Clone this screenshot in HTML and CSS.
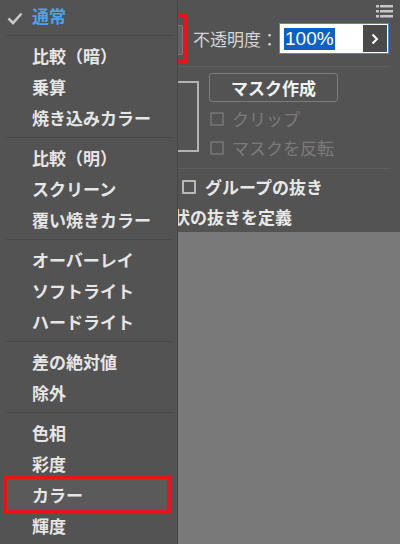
FILE: index.html
```html
<!DOCTYPE html>
<html lang="ja">
<head>
<meta charset="utf-8">
<title>描画モード</title>
<link rel="stylesheet" href="styles.css">
</head>
<body>
<div class="panel">
  <div class="topbar">
    <svg class="panel-menu" width="17" height="13" viewBox="0 0 17 13">
      <rect x="0" y="0" width="3" height="2.5"/><rect x="4" y="0" width="13" height="2.5"/>
      <rect x="0" y="5" width="3" height="2.5"/><rect x="4" y="5" width="13" height="2.5"/>
      <rect x="0" y="10" width="3" height="2.5"/><rect x="4" y="10" width="13" height="2.5"/>
    </svg>
  </div>
  <div class="opacity-row">
    <div class="blend"></div>
    <span class="label">不透明度：</span>
    <div class="field">
      <span class="sel">100%</span>
      <span class="spin"><svg width="8" height="12" viewBox="0 0 8 12"><path d="M1.5 1.5 L6 6 L1.5 10.5" fill="none" stroke="#fff" stroke-width="2"/></svg></span>
    </div>
  </div>
  <div class="rule"></div>
  <div class="mask">
    <div class="thumb"></div>
    <div class="mask-col">
      <div class="btn">マスク作成</div>
      <div class="check disabled"><span class="box"></span><span>クリップ</span></div>
      <div class="check disabled"><span class="box"></span><span>マスクを反転</span></div>
    </div>
  </div>
  <div class="rule rule2"></div>
  <div class="check group"><span class="box"></span><span>グループの抜き</span></div>
  <div class="define">形状の抜きを定義</div>
  <div class="canvas"></div>
  <div class="annot"></div>
</div>
<div class="menu">
  <div class="item current"><span class="slot"><svg class="tick" width="16" height="13" viewBox="0 0 16 13"><path d="M1.5 6.5 L6 11 L14.5 1.5" fill="none" stroke="#c9c9c9" stroke-width="2.6"/></svg></span>通常</div>
  <div class="sep"></div>
  <div class="item"><span class="slot"></span>比較（暗）</div>
  <div class="item"><span class="slot"></span>乗算</div>
  <div class="item"><span class="slot"></span>焼き込みカラー</div>
  <div class="sep"></div>
  <div class="item"><span class="slot"></span>比較（明）</div>
  <div class="item"><span class="slot"></span>スクリーン</div>
  <div class="item"><span class="slot"></span>覆い焼きカラー</div>
  <div class="sep"></div>
  <div class="item"><span class="slot"></span>オーバーレイ</div>
  <div class="item"><span class="slot"></span>ソフトライト</div>
  <div class="item"><span class="slot"></span>ハードライト</div>
  <div class="sep"></div>
  <div class="item"><span class="slot"></span>差の絶対値</div>
  <div class="item"><span class="slot"></span>除外</div>
  <div class="sep"></div>
  <div class="item"><span class="slot"></span>色相</div>
  <div class="item"><span class="slot"></span>彩度</div>
  <div class="item marked"><span class="slot"></span>カラー</div>
  <div class="item"><span class="slot"></span>輝度</div>
</div>
</body>
</html>
```

FILE: styles.css
```css
html, body {
  margin: 0;
  padding: 0;
}
body {
  width: 400px;
  height: 544px;
  overflow: hidden;
  position: relative;
  background: #535353;
  font-family: "Noto Sans CJK JP", "Noto Sans", sans-serif;
  color: #e4e4e4;
}
.panel {
  position: relative;
  height: 544px;
  display: flex;
  flex-direction: column;
}
.topbar {
  height: 23px;
  box-sizing: border-box;
  padding: 5px 7px 0 0;
  display: flex;
  justify-content: flex-end;
  align-items: flex-start;
}
.panel-menu {
  fill: #c6c6c6;
  display: block;
}
.opacity-row {
  height: 31px;
  display: flex;
  align-items: flex-start;
}
.blend {
  margin: 2px 0 0 10px;
  width: 173px;
  height: 30px;
  box-sizing: border-box;
  border: 1px solid #7b7b7b;
  border-radius: 2px;
  background: #626262;
}
.label {
  margin-left: 10px;
  font-size: 17px;
  line-height: 31px;
  color: #d6d6d6;
  width: 85px;
}
.field {
  margin-left: 1px;
  width: 110px;
  height: 31px;
  box-sizing: border-box;
  border: 1px solid #3b8fe2;
  padding: 1px;
  background: #fff;
  display: flex;
  align-items: center;
}
.sel {
  margin-left: 3px;
  height: 22px;
  line-height: 22px;
  padding: 0 1px;
  background: #0b62c6;
  color: #fff;
  font-family: "Liberation Sans", Arial, sans-serif;
  font-size: 19px;
}
.spin {
  margin-left: auto;
  width: 24px;
  height: 27px;
  background: #4a4a4a;
  display: flex;
  align-items: center;
  justify-content: center;
}
.spin svg { display: block; }
.rule {
  margin: 12px 10px 0 0;
  height: 1px;
  background: #5f5f5f;
}
.rule2 {
  margin-top: 6px;
}
.mask {
  padding-top: 6px;
  display: flex;
  align-items: flex-start;
}
.thumb {
  margin: 8px 0 0 139px;
  width: 60px;
  height: 71px;
  box-sizing: border-box;
  border: 2px solid #b3b3b3;
}
.mask-col {
  margin-left: 10px;
  display: flex;
  flex-direction: column;
}
.btn {
  width: 129px;
  height: 29px;
  box-sizing: border-box;
  border: 1px solid #7c7c7c;
  border-radius: 3px;
  margin-bottom: 2px;
  text-align: center;
  font-size: 17px;
  line-height: 27px;
  font-weight: 700;
  color: #f2f2f2;
}
.check {
  height: 29px;
  display: flex;
  align-items: center;
  font-size: 17px;
  line-height: 29px;
}
.check .box {
  width: 14px;
  height: 14px;
  box-sizing: border-box;
  border: 2px solid #b8b8b8;
  border-radius: 1px;
  margin-right: 8px;
}
.disabled {
  margin-left: 1px;
  color: #7b7b7b;
}
.disabled .box {
  border-color: #6e6e6e;
}
.group {
  margin: 3px 0 0 182px;
  font-weight: 700;
  color: #e8e8e8;
}
.group .box {
  margin-right: 9px;
}
.define {
  margin: 1px 0 0 156px;
  height: 30px;
  font-size: 17px;
  line-height: 30px;
  font-weight: 700;
  color: #e8e8e8;
}
.canvas {
  flex: 1;
  background: #797979;
}
.annot {
  position: absolute;
  left: 120px;
  top: 13px;
  width: 68px;
  height: 51px;
  box-sizing: border-box;
  border: 4px solid #e5141d;
}
.menu {
  position: absolute;
  left: 0;
  top: 0;
  width: 177px;
  height: 544px;
  overflow: hidden;
  background: #535353;
  border-right: 1px solid #474747;
}
.item {
  height: 31px;
  margin: 0 10px 0 7px;
  display: flex;
  align-items: center;
  font-size: 17px;
  line-height: 31px;
  font-weight: 700;
  color: #e6e6e6;
  white-space: nowrap;
}
.slot {
  width: 25px;
  height: 31px;
  flex: none;
  position: relative;
}
.tick {
  display: block;
  margin-top: 12px;
}
.current {
  color: #4ba2ee;
}
.sep {
  height: 1px;
  margin: 4px 5px 4px 6px;
  background: #474747;
}
.marked {
  background: #5a5a5a;
  outline: 4px solid #e5141d;
}
```
